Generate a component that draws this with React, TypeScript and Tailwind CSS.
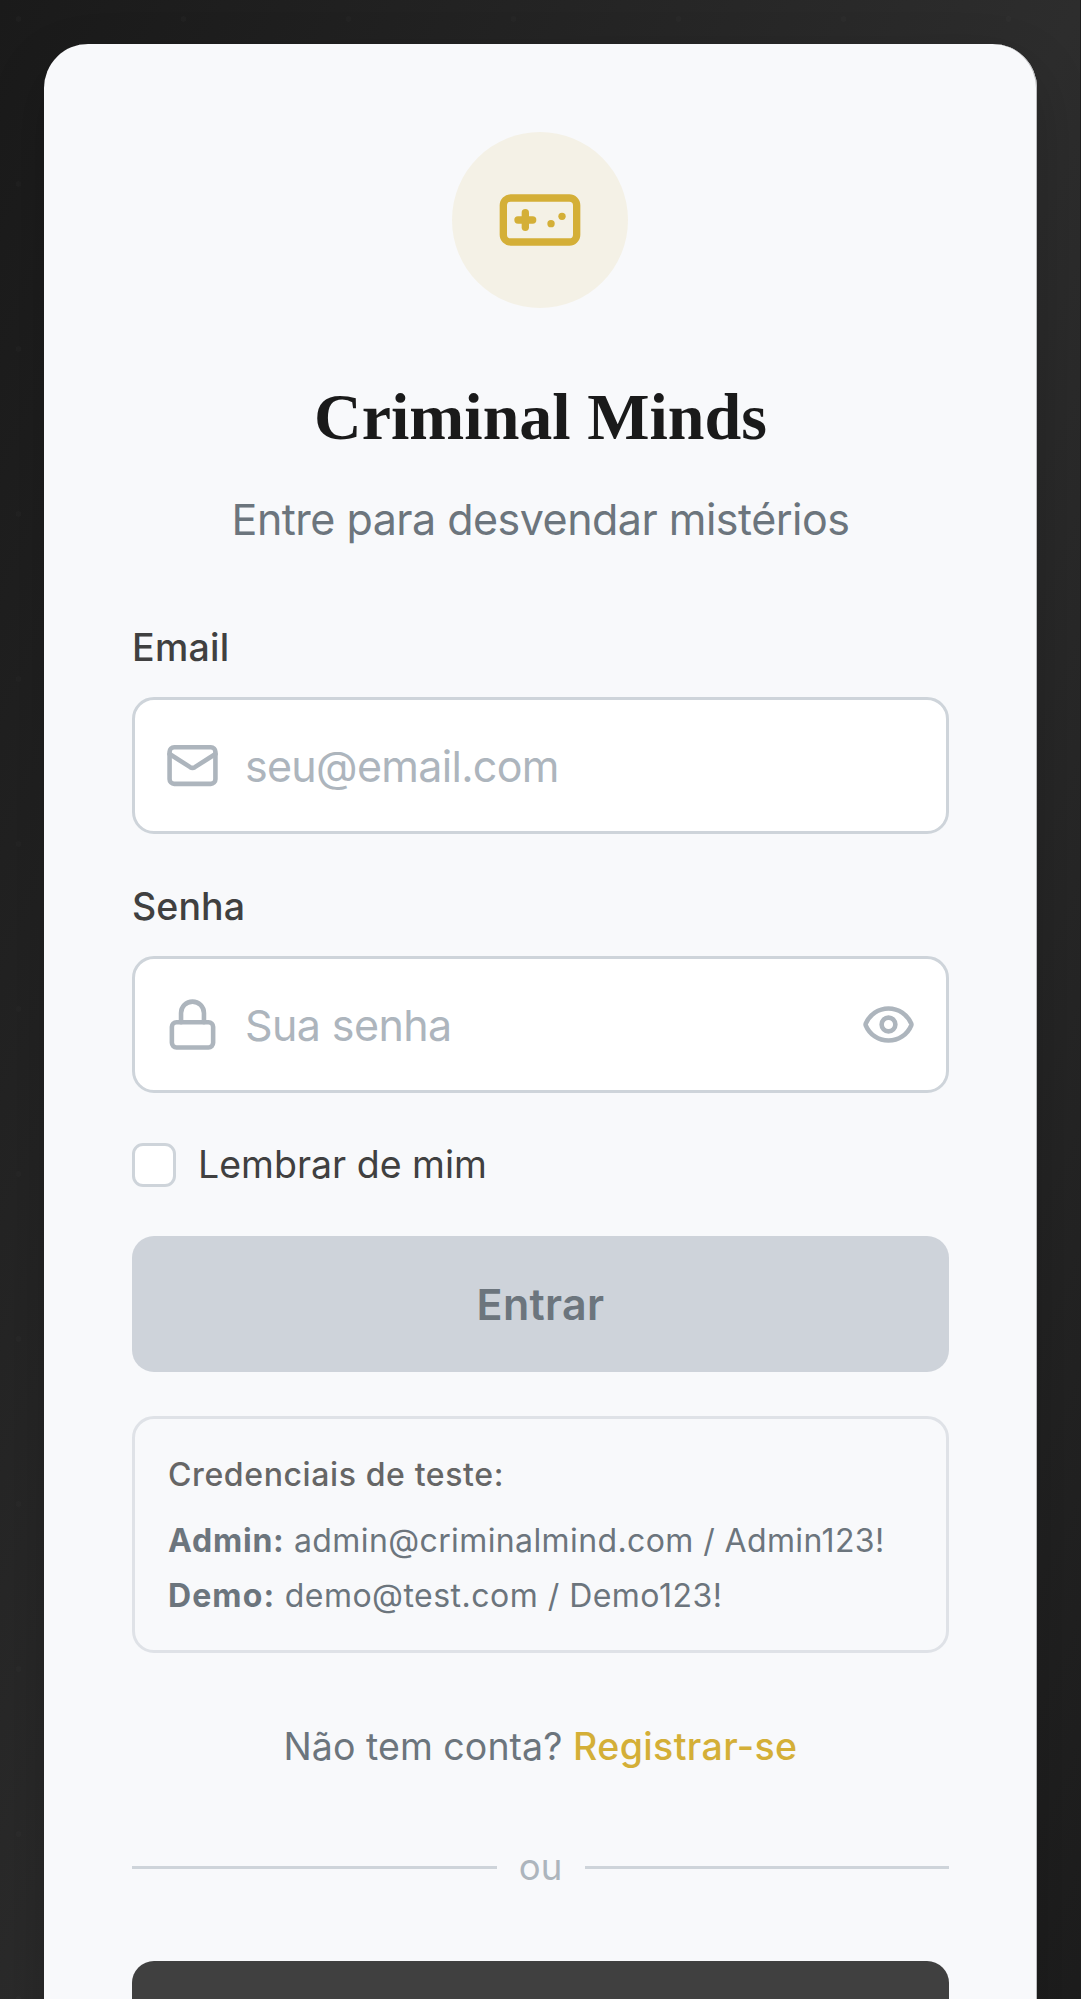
import type { ReactNode } from "react";
import { Eye, Gamepad, Lock, Mail } from "lucide-react";

function Field({
  icon,
  placeholder,
  type,
  tracking,
  action,
}: {
  icon: ReactNode;
  placeholder: string;
  type: string;
  tracking: string;
  action?: ReactNode;
}) {
  return (
    <div className="flex h-[137px] items-center rounded-[22px] border-[3px] border-[#ced4da] bg-white px-[30px] text-[#adb5bd]">
      {icon}
      <input
        type={type}
        placeholder={placeholder}
        className={`ml-[25px] h-[66px] min-w-0 flex-1 bg-transparent text-[43px] leading-[64px] outline-none placeholder:text-[#adb5bd] ${tracking}`}
      />
      {action}
    </div>
  );
}

export default function App() {
  return (
    <div className="h-[1999px] w-[1081px] overflow-hidden border-r border-[#1e1e1e] bg-[radial-gradient(circle_at_18.5px_19px,rgba(255,255,255,0.015)_2.5px,transparent_3px),linear-gradient(to_bottom_right,#1a1a1a,#2d2d2d_50%,#1a1a1a)] bg-[length:165px_165px,1081px_2343px] px-[44px] pt-[44px] font-['Inter',sans-serif] antialiased">
      <main className="flex h-[2255px] w-[993px] flex-col rounded-[44px] bg-[#f8f9fb] px-[88px] pt-[88px] shadow-[0_22px_55px_rgba(0,0,0,0.2),inset_-1px_0_0_#bcbdbe]">
        <div className="mr-px flex size-[176px] items-center justify-center self-center rounded-full bg-[#f4f1e6]">
          <Gamepad className="size-[88px] text-[#d4af37]" strokeWidth={2} />
        </div>

        <h1 className="mt-[66px] text-center font-['Liberation_Serif',serif] text-[66px] leading-[86px] font-bold text-[#1a1a1a]">
          Criminal Minds
        </h1>
        <p className="mt-[26px] text-center text-[43px] leading-[66px] tracking-[-0.51px] text-[#6c757d]">
          Entre para desvendar mistérios
        </p>

        <label className="mt-[67px] text-[37.5px] leading-[58px] font-medium tracking-[0.3px] text-[#404040]">
          Email
        </label>
        <div className="mt-[20px]">
          <Field
            icon={<Mail className="size-[55px]" strokeWidth={2} />}
            placeholder="seu@email.com"
            type="email"
            tracking="tracking-[-0.7px]"
          />
        </div>

        <label className="mt-[44px] text-[37.5px] leading-[58px] font-medium tracking-[0.1px] text-[#404040]">
          Senha
        </label>
        <div className="mt-[20px]">
          <Field
            icon={<Lock className="size-[55px]" strokeWidth={2} />}
            placeholder="Sua senha"
            type="password"
            tracking="tracking-[-0.6px]"
            action={
              <button type="button" aria-label="Mostrar senha">
                <Eye className="size-[55px]" strokeWidth={2} />
              </button>
            }
          />
        </div>

        <div className="mt-[50px] flex h-[44px] items-center gap-[22px]">
          <span className="size-[44px] rounded-[11px] border-[3px] border-[#ced4da] bg-white" />
          <span className="text-[37.5px] leading-[44px] text-[#404040]">Lembrar de mim</span>
        </div>

        <button
          type="button"
          className="mt-[49px] h-[136px] shrink-0 rounded-[22px] bg-[#ced3da] text-[43px] leading-[66px] font-semibold tracking-[0.3px] text-[#6c757d]"
        >
          Entrar
        </button>

        <section className="mt-[44px] h-[237px] shrink-0 rounded-[22px] border-[3px] border-[#dfe2e7] px-[33px] pt-[34px] text-[32px] text-[#6c757d]">
          <p className="leading-[44px] font-medium tracking-[0.61px] text-[#666666]">Credenciais de teste:</p>
          <p className="mt-[16px] leading-[55px] tracking-[0.39px] whitespace-nowrap">
            <strong className="font-bold tracking-[0.8px]">Admin:</strong> admin@criminalmind.com / Admin123!
          </p>
          <p className="leading-[55px] tracking-[0.48px] whitespace-nowrap">
            <strong className="font-bold tracking-[1.1px]">Demo:</strong> demo@test.com / Demo123!
          </p>
        </section>

        <p className="mt-[65px] text-center text-[37.5px] leading-[58px] tracking-[0.05px] text-[#6c757d]">
          Não tem conta? <a className="font-medium tracking-[0.4px] text-[#d4af37]">Registrar-se</a>
        </p>

        <div className="mt-[62px] flex items-center">
          <span className="h-[3px] flex-1 bg-[#ced4da]" />
          <span className="mx-[22px] w-[44px] text-center text-[36.5px] leading-[58px] text-[#adb5bd]">ou</span>
          <span className="h-[3px] flex-1 bg-[#ced4da]" />
        </div>

        <button type="button" aria-label="Continuar" className="mt-[65px] h-[137px] shrink-0 rounded-[22px] bg-[#404040]" />
      </main>
    </div>
  );
}
